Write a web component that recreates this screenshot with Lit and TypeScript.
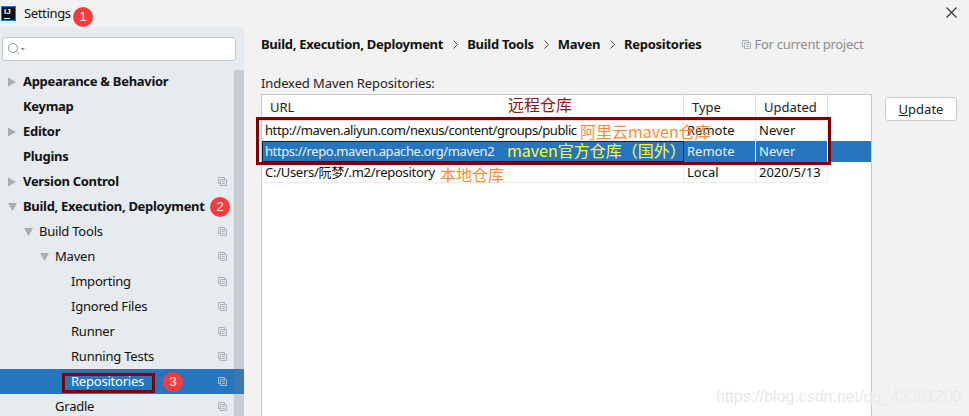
import { LitElement, html, css, svg } from "lit";
import { customElement } from "lit/decorators.js";

const copyIcon = svg`<path d="M0.5 0.5H6.5V2.5M2.5 2.5H8.5V8.5H2.5ZM0.5 0.5V6.5H2.5M4 4.5H7M4 6.5H7" fill="none" stroke="currentColor" stroke-width="1"/>`;

type Row = { t: string; d: number; arrow?: "r" | "d"; bold?: boolean; copy?: boolean; sel?: boolean; cls?: string };
const rows: Row[] = [
  { t: "Appearance & Behavior", d: 0, arrow: "r", bold: true },
  { t: "Keymap", d: 0, bold: true },
  { t: "Editor", d: 0, arrow: "r", bold: true },
  { t: "Plugins", d: 0, bold: true },
  { t: "Version Control", d: 0, arrow: "r", bold: true, copy: true },
  { t: "Build, Execution, Deployment", d: 0, arrow: "d", bold: true },
  { t: "Build Tools", d: 1, arrow: "d", copy: true },
  { t: "Maven", d: 2, arrow: "d", copy: true },
  { t: "Importing", d: 3, copy: true },
  { t: "Ignored Files", d: 3, copy: true },
  { t: "Runner", d: 3, copy: true },
  { t: "Running Tests", d: 3, copy: true },
  { t: "Repositories", d: 3, copy: true, sel: true },
  { t: "Gradle", d: 2, copy: true },
];

const repos = [
  { url: "http://maven.aliyun.com/nexus/content/groups/public", type: "Remote", upd: "Never" },
  { url: "https://repo.maven.apache.org/maven2", type: "Remote", upd: "Never", sel: true },
  { url: "C:/Users/阮梦/.m2/repository", type: "Local", upd: "2020/5/13", local: true },
];

@customElement("app-root")
export class AppRoot extends LitElement {
  static styles = css`
    :host { display: block; width: 969px; height: 416px; overflow: hidden; position: relative; background: #f2f2f2;
      font-family: "Noto Sans", "Noto Sans CJK SC", sans-serif; font-size: 13px; color: #111; }
    .titlebar { height: 27px; display: flex; align-items: center; padding-left: 1px; gap: 8px; font-size: 13px; }
    .logo { width: 15px; height: 15px; box-sizing: border-box; background: #111; border: 1px solid #1c7fd6; color: #fff;
      font: bold 8px/9px "Liberation Sans", sans-serif; padding-left: 2px; position: relative; flex: none; }
    .logo i { position: absolute; left: 2px; bottom: 1px; width: 6px; height: 1px; background: #fff; }
    .title { margin-top: -1px; letter-spacing: -0.35px; }
    .close { margin-left: auto; margin-right: 12px; width: 11px; height: 11px; margin-top: -2px; }
    .body { display: flex; height: 389px; }
    .side { width: 244px; flex: none; background: #e6ebf0; position: relative; overflow: hidden; box-sizing: border-box; padding-top: 10px; }
    .search { margin-left: 2px; width: 234px; height: 24px; box-sizing: border-box; background: #fff; border: 1px solid #c6c8ca; border-radius: 3px;
      display: flex; align-items: center; padding-left: 5px; }
    .tree { margin-top: 8px; }
    .row { height: 25px; display: flex; align-items: center; position: relative; line-height: 25px; white-space: nowrap; letter-spacing: -0.22px; }
    .row.sel { background: #2675bf; color: #fff; }
    .row b { font-weight: 700; letter-spacing: -0.3px; }
    .arrow { width: 10px; height: 10px; flex: none; margin-right: 5px; }
    .d0 { padding-left: 8px; }
    .d1 { padding-left: 24px; }
    .d2 { padding-left: 40px; }
    .d3 { padding-left: 71px; }
    .d2.noarrow { padding-left: 55px; }
    .d0.noarrow { padding-left: 23px; }
    .copy { position: absolute; left: 218px; top: 8px; width: 9px; height: 9px; color: #a9b1b8; }
    .sel .copy { color: #a4bfd8; }
    .scroll { position: absolute; left: 234px; top: 43px; bottom: 0; width: 10px; background: rgba(120, 125, 135, 0.27); }
    .main { flex: 1; min-width: 0; padding: 0 0 0 17px; position: relative; }
    .crumbs { display: flex; align-items: center; height: 20px; margin-top: 7px; font-weight: 700; white-space: nowrap; letter-spacing: -0.28px; }
    .sep { width: 5px; height: 9px; margin: 0 9px 0 10px; }
    .scope { display: flex; align-items: center; gap: 4px; margin-left: 40px; font-weight: 400; color: #8c8c8c; font-size: 13px; letter-spacing: -0.28px; }
    .scope svg { width: 9px; height: 9px; color: #a9b1b8; }
    .label { margin-top: 19px; height: 20px; line-height: 20px; color: #222; white-space: nowrap; letter-spacing: -0.1px; }
    .content { display: flex; margin-top: 1px; }
    .table { width: 611px; height: 330px; box-sizing: border-box; background: #fff; border: 1px solid #c9c9c9; border-bottom: 0; flex: none; }
    .tr { display: grid; grid-template-columns: 422px 72px 72px 1fr; height: 21px; line-height: 20px; white-space: nowrap; box-sizing: border-box; }
    .tr > div { padding-left: 3px; border-right: 1px solid #ececec; overflow: visible; border-bottom: 1px solid #ececec; }
    .tr > div:last-child { border-right: 0; }
    .tr .url { letter-spacing: -0.41px; }
    .tr.local .url { letter-spacing: -0.28px; }
    .head { height: 25px; line-height: 25px; }
    .head > div { padding-left: 8px; border-right: 1px solid #ddd; color: #222; border-bottom: 1px solid #ddd; }
    .tr.sel > div { background: #2675bf; color: #e8f1fa; border-bottom-color: #2675bf; border-right-color: #fff; }
    .tr.sel > div:first-child { outline: 1px solid #10243c; outline-offset: -1px; }
    .tr.sel > div:last-child { border-right: 0; }
    .tr > div:last-child { border-bottom: 0; }
    .side-btn { margin-left: 13px; margin-top: 3px; width: 72px; height: 24px; box-sizing: border-box; background: #fff; border: 1px solid #c9c9c9; border-radius: 3px;
      text-align: center; line-height: 22px; color: #222; }
    u { text-decoration: underline; }
    .badge { position: absolute; width: 20px; height: 20px; border-radius: 50%; background: #fa3b3e; color: #fff; font: 13px/20px "Liberation Sans", sans-serif; text-align: center; }
    .box { position: absolute; border: 3px solid #7c0000; box-sizing: border-box; }
    .note { position: absolute; white-space: nowrap; font-family: "Noto Sans CJK SC", sans-serif; line-height: 20px; font-size: 16px; }
    .n-dark { color: #8b1a1a; }
    .n-orange { color: #ff8c3c; }
    .n-yellow { color: #ffff30; }
    .wm { position: absolute; left: 716px; top: 388px; font: 16px/18px "Liberation Sans", sans-serif; color: #e8e8e8; text-shadow: 0 0 1px #fff; white-space: nowrap; }
  `;

  arrow(dir: "r" | "d") {
    return html`<svg class="arrow" viewBox="0 0 10 10"><path d=${dir === "r" ? "M0 0.5L8 5L0 9.5Z" : "M0 1H9L4.5 9Z"} fill="#a9aeb2"/></svg>`;
  }

  renderRow(r: Row) {
    const cls = `row d${r.d} ${r.arrow ? "" : "noarrow"} ${r.sel ? "sel" : ""}`;
    return html`<div class=${cls}>
      ${r.arrow ? this.arrow(r.arrow) : ""}
      ${r.bold ? html`<b>${r.t}</b>` : html`<span>${r.t}</span>`}
      ${r.copy ? html`<svg class="copy" viewBox="0 0 9 9">${copyIcon}</svg>` : ""}
    </div>`;
  }

  render() {
    return html`
      <div class="titlebar">
        <div class="logo">IJ<i></i></div>
        <span class="title">Settings</span>
        <svg class="close" viewBox="0 0 11 11"><path d="M0.5 0.5L10.5 10.5M10.5 0.5L0.5 10.5" stroke="#333" stroke-width="1.1"/></svg>
      </div>
      <div class="body">
        <div class="side">
          <div class="search">
            <svg width="17" height="12" viewBox="0 0 17 12"><circle cx="5" cy="5" r="4.5" fill="none" stroke="#8f9498" stroke-width="1"/><path d="M8.5 8.5L11 11" stroke="#8f9498"/><path d="M12.5 5H17L14.7 7.5Z" fill="#8f9498"/></svg>
          </div>
          <div class="tree">${rows.map((r) => this.renderRow(r))}</div>
          <div class="scroll"></div>
        </div>
        <div class="main">
          <div class="crumbs">
            <span>Build, Execution, Deployment</span>
            ${this.sep()}<span>Build Tools</span>
            ${this.sep()}<span>Maven</span>
            ${this.sep()}<span>Repositories</span>
            <span class="scope"><svg viewBox="0 0 9 9">${copyIcon}</svg>For current project</span>
          </div>
          <div class="label">Indexed Maven Repositories:</div>
          <div class="content">
            <div class="table">
              <div class="tr head"><div>URL</div><div>Type</div><div>Updated</div><div></div></div>
              ${repos.map((r) => html`<div class="tr ${r.sel ? "sel" : ""} ${r.local ? "local" : ""}"><div class="url">${r.url}</div><div>${r.type}</div><div>${r.upd}</div><div></div></div>`)}
            </div>
            <div class="side-btn"><u>U</u>pdate</div>
          </div>
        </div>
      </div>
      <span class="badge" style="left:73px;top:7px">1</span>
      <span class="badge" style="left:210px;top:197px">2</span>
      <span class="badge" style="left:163px;top:372px">3</span>
      <div class="box" style="left:62px;top:373px;width:93px;height:20px"></div>
      <div class="box" style="left:256px;top:117px;width:575px;height:48px"></div>
      <span class="note n-dark" style="left:508px;top:94px">远程仓库</span>
      <span class="note n-orange" style="left:580px;top:121px">阿里云maven仓库</span>
      <span class="note n-yellow" style="left:507px;top:140px">maven官方仓库（国外）</span>
      <span class="note n-orange" style="left:440px;top:164px">本地仓库</span>
      <span class="wm">https://blog.csdn.net/qq_43361209</span>
    `;
  }

  sep() {
    return html`<svg class="sep" viewBox="0 0 5 9"><path d="M0.5 0.5L4.5 4.5L0.5 8.5" fill="none" stroke="#444"/></svg>`;
  }
}
